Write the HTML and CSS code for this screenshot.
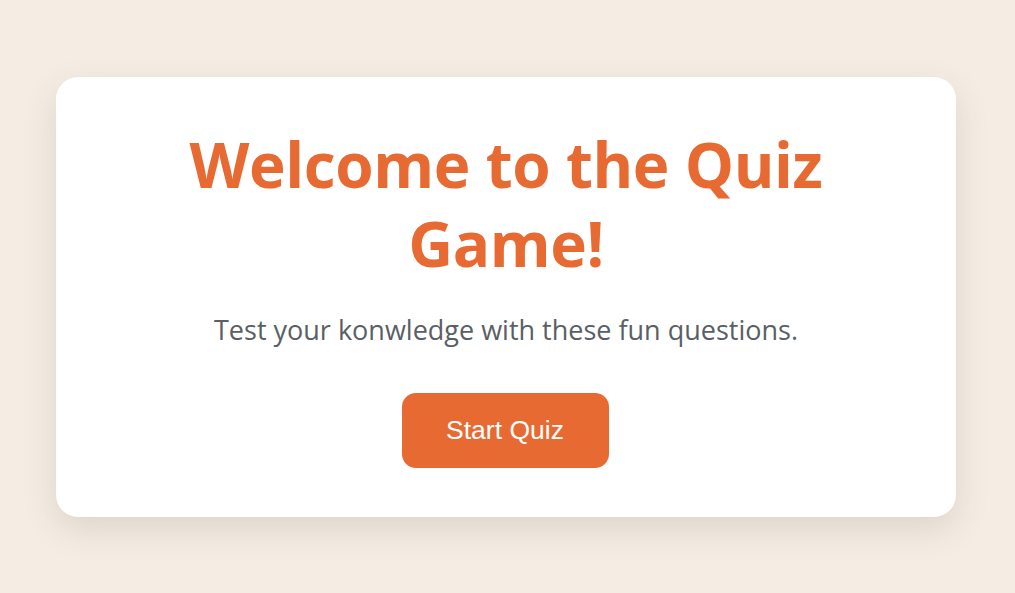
FILE: index.html
```html
<!DOCTYPE html>
<html lang="en">
<head>
<meta charset="utf-8">
<title>Quiz Game</title>
<link rel="stylesheet" href="styles.css">
</head>
<body>
<main class="card">
  <h1 class="title">Welcome to the Quiz Game!</h1>
  <p class="subtitle">Test your konwledge with these fun questions.</p>
  <button class="start-btn" type="button">Start Quiz</button>
</main>
</body>
</html>
```
FILE: styles.css
```css
html, body {
  margin: 0;
  padding: 0;
}
body {
  background: #f5ede4;
  height: 100vh;
  box-sizing: border-box;
  padding-right: 3px;
  display: flex;
  align-items: center;
  justify-content: center;
  font-family: "Open Sans", "Noto Sans", sans-serif;
}
.card {
  width: 900px;
  box-sizing: border-box;
  background: #ffffff;
  border-radius: 22px;
  box-shadow: 0 12px 34px rgba(60, 45, 25, 0.13);
  padding: 48px 90px 49px;
  display: flex;
  flex-direction: column;
  align-items: center;
  text-align: center;
}
.title {
  margin: 0;
  color: #e86a33;
  font-size: 62px;
  font-weight: 700;
  line-height: 79px;
  letter-spacing: -0.4px;
}
.subtitle {
  margin: 30px 0 0;
  color: #5a5f66;
  font-size: 27px;
  line-height: 34px;
}
.start-btn {
  margin-top: 46px;
  margin-right: 2px;
  width: 207px;
  height: 75px;
  border: none;
  border-radius: 14px;
  background: #e86a33;
  color: #ffffff;
  font-family: "Liberation Sans", Arial, sans-serif;
  font-size: 26.5px;
  cursor: pointer;
}
```
